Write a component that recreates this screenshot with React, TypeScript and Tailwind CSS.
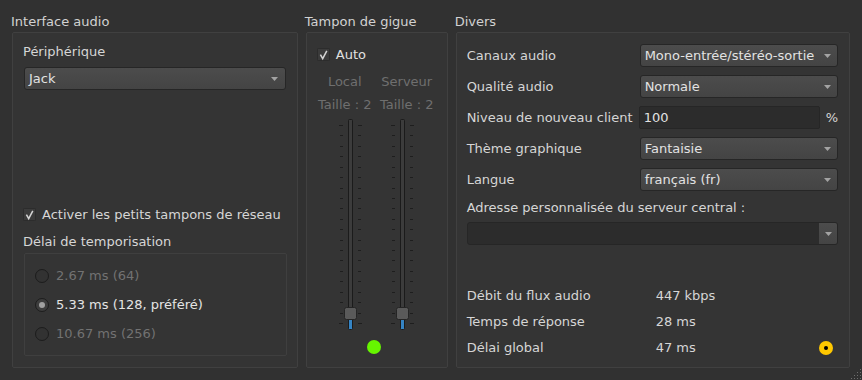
import React from 'react';

// ── Small widgets ─────────────────────────────────────────────────────────────

function Arrow() {
  return (
    <svg width="7" height="4" viewBox="0 0 7 4" className="shrink-0">
      <polygon points="0,0 7,0 3.5,4" fill="#a3a3a3" />
    </svg>
  );
}

function Combo({ value, className = '' }: { value: string; className?: string }) {
  return (
    <div
      className={`flex h-[23px] items-center justify-between rounded-[3px] border border-[#262626] bg-linear-to-b from-[#4c4c4c] to-[#444444] pl-[4px] pr-[6px] text-[#e2e2e2] ${className}`}
    >
      <span className="whitespace-nowrap">{value}</span>
      <Arrow />
    </div>
  );
}

function Check() {
  return (
    <svg width="13" height="13" viewBox="0 0 13 13" className="shrink-0">
      <rect x="0.5" y="0.5" width="12" height="12" rx="1" fill="#3b3b3b" stroke="#2c2c2c" />
      <path d="M3.4 6.6 L5.7 10.6 L9.8 2.8" fill="none" stroke="#d4d4d4" strokeWidth="1.5" />
    </svg>
  );
}

function Radio({ checked }: { checked?: boolean }) {
  return (
    <svg width="14" height="14" viewBox="0 0 14 14" className="shrink-0">
      <circle cx="7" cy="7" r="6.5" fill={checked ? '#3d3d3d' : '#323232'} stroke="#1d1d1d" />
      {checked && <circle cx="7" cy="7" r="3" fill="#a0a0a0" />}
    </svg>
  );
}

const TICKS = Array.from({ length: 20 }, (_, i) => Math.round((i * 198) / 19));

function Fader() {
  return (
    <svg width="25" height="214" viewBox="0 0 25 214" className="shrink-0">
      {TICKS.map((t, i) => {
        const long = i === 0 || i === 19;
        const y = 7 + t + 0.5;
        return (
          <g key={i} stroke="#1e1e1e">
            <line x1={long ? 1 : 2} x2={5} y1={y} y2={y} />
            <line x1={20} x2={long ? 24 : 23} y1={y} y2={y} />
          </g>
        );
      })}
      <rect x="10.5" y="1.5" width="4" height="200" rx="1" fill="#3c3c3c" stroke="#1b1b1b" />
      <rect x="10.5" y="200.5" width="4" height="11" rx="1" fill="#3584c4" stroke="#1b1b1b" />
      <rect x="6.5" y="189.5" width="12" height="12" rx="2" fill="#5a5a5a" stroke="#252525" />
    </svg>
  );
}

function Grip() {
  const dots: [number, number][] = [];
  for (let i = 0; i < 4; i++) for (let j = 0; j < 4; j++) if (i + j >= 3) dots.push([i, j]);
  return (
    <svg width="12" height="12" viewBox="0 0 12 12" className="absolute bottom-0 right-0">
      {dots.map(([i, j]) => (
        <rect key={`${i}-${j}`} x={1 + i * 3} y={1 + j * 3} width="1" height="1" fill="#6e6e6e" />
      ))}
    </svg>
  );
}

// ── Group boxes ───────────────────────────────────────────────────────────────

function Group({ title, width, children, className = '' }: { title: string; width: string; children: React.ReactNode; className?: string }) {
  return (
    <div className={`flex flex-col ${width}`}>
      <div className="-ml-px h-[15px] leading-[15px] text-[#d2d2d2]">{title}</div>
      <div className={`mt-[3px] flex flex-1 flex-col rounded-[2px] border border-[#404040] bg-[#343434] ${className}`}>
        {children}
      </div>
    </div>
  );
}

export default function App() {
  return (
    <div className="relative flex h-[380px] w-[862px] gap-[8px] bg-[#313131] px-[12px] pb-[12px] pt-[14px] font-['DejaVu_Sans',sans-serif] text-[13px] leading-[15px] text-[#d6d6d6]">
      {/* Interface audio */}
      <Group title="Interface audio" width="w-[286px]" className="pl-[10px] pt-[11px] pb-[11px]">
        <div>Périphérique</div>
        <Combo value="Jack" className="ml-px mt-[8px] w-[262px] pr-[7px]" />
        <div className="flex-1" />
        <div className="flex h-[15px] items-center gap-[6px]">
          <Check />
          <span>Activer les petits tampons de réseau</span>
        </div>
        <div className="mt-[12px]">Délai de temporisation</div>
        <div className="ml-px mt-[4px] flex h-[103px] w-[263px] flex-col gap-[14px] rounded-[2px] border border-[#3f3f3f] pl-[10px] pt-[14px]">
          <div className="flex h-[15px] items-center gap-[7px] text-[#727272]">
            <Radio />
            <span>2.67 ms (64)</span>
          </div>
          <div className="flex h-[15px] items-center gap-[7px] text-[#e4e4e4]">
            <Radio checked />
            <span>5.33 ms (128, préféré)</span>
          </div>
          <div className="flex h-[15px] items-center gap-[7px] text-[#727272]">
            <Radio />
            <span>10.67 ms (256)</span>
          </div>
        </div>
      </Group>

      {/* Tampon de gigue */}
      <Group title="Tampon de gigue" width="w-[142px]" className="pt-[14px]">
        <div className="flex h-[15px] items-center gap-[6px] pl-[10px]">
          <Check />
          <span className="text-[#e0e0e0]">Auto</span>
        </div>
        <div className="ml-[7px] mt-[12px] flex text-[#6f6f6f]">
          <span className="w-[62px] text-center">Local</span>
          <span className="w-[62px] text-center">Serveur</span>
        </div>
        <div className="ml-[7px] mt-[8px] flex whitespace-nowrap text-[#6f6f6f]">
          <span className="w-[62px] text-center">Taille : 2</span>
          <span className="w-[62px] text-center">Taille : 2</span>
        </div>
        <div className="ml-[31px] mt-[6px] flex gap-[27px]">
          <Fader />
          <Fader />
        </div>
        <div className="ml-[60px] mt-[8px] h-[14px] w-[14px] rounded-full bg-[#66f500]" />
      </Group>

      {/* Divers */}
      <Group title="Divers" width="flex-1" className="pl-[10px] pr-[11px] pt-[11px] pb-[12px]">
        <div className="flex flex-col gap-[8px]">
          <div className="flex h-[23px] items-center">
            <span className="w-[173px]">Canaux audio</span>
            <Combo value="Mono-entrée/stéréo-sortie" className="w-[198px]" />
          </div>
          <div className="flex h-[23px] items-center">
            <span className="w-[173px]">Qualité audio</span>
            <Combo value="Normale" className="w-[198px]" />
          </div>
          <div className="flex h-[23px] items-center">
            <span className="w-[172px] whitespace-nowrap">Niveau de nouveau client</span>
            <div className="flex h-[23px] w-[181px] items-center rounded-[2px] border border-[#262626] bg-[#2c2c2c] pl-[4px] text-[#e2e2e2]">
              100
            </div>
            <span className="ml-[6px]">%</span>
          </div>
          <div className="flex h-[23px] items-center">
            <span className="w-[173px]">Thème graphique</span>
            <Combo value="Fantaisie" className="w-[198px]" />
          </div>
          <div className="flex h-[23px] items-center">
            <span className="w-[173px]">Langue</span>
            <Combo value="français (fr)" className="w-[198px]" />
          </div>
        </div>
        <div className="mt-[9px]">Adresse personnalisée du serveur central :</div>
        <div className="mt-[7px] flex h-[23px] overflow-hidden rounded-[3px] border border-[#262626] bg-[#2c2c2c]">
          <div className="flex-1" />
          <div className="flex w-[18px] items-center justify-center bg-linear-to-b from-[#4c4c4c] to-[#444444]">
            <Arrow />
          </div>
        </div>
        <div className="flex-1" />
        <div className="flex flex-col gap-[11px]">
          <div className="flex">
            <span className="w-[189px]">Débit du flux audio</span>
            <span>447 kbps</span>
          </div>
          <div className="flex">
            <span className="w-[189px]">Temps de réponse</span>
            <span>28 ms</span>
          </div>
          <div className="flex items-center">
            <span className="w-[189px]">Délai global</span>
            <span>47 ms</span>
            <div className="ml-auto mr-[5px] flex h-[14px] w-[14px] items-center justify-center rounded-full bg-[#ffc800]">
              <div className="h-[4px] w-[4px] rounded-full bg-black" />
            </div>
          </div>
        </div>
      </Group>

      <Grip />
    </div>
  );
}
